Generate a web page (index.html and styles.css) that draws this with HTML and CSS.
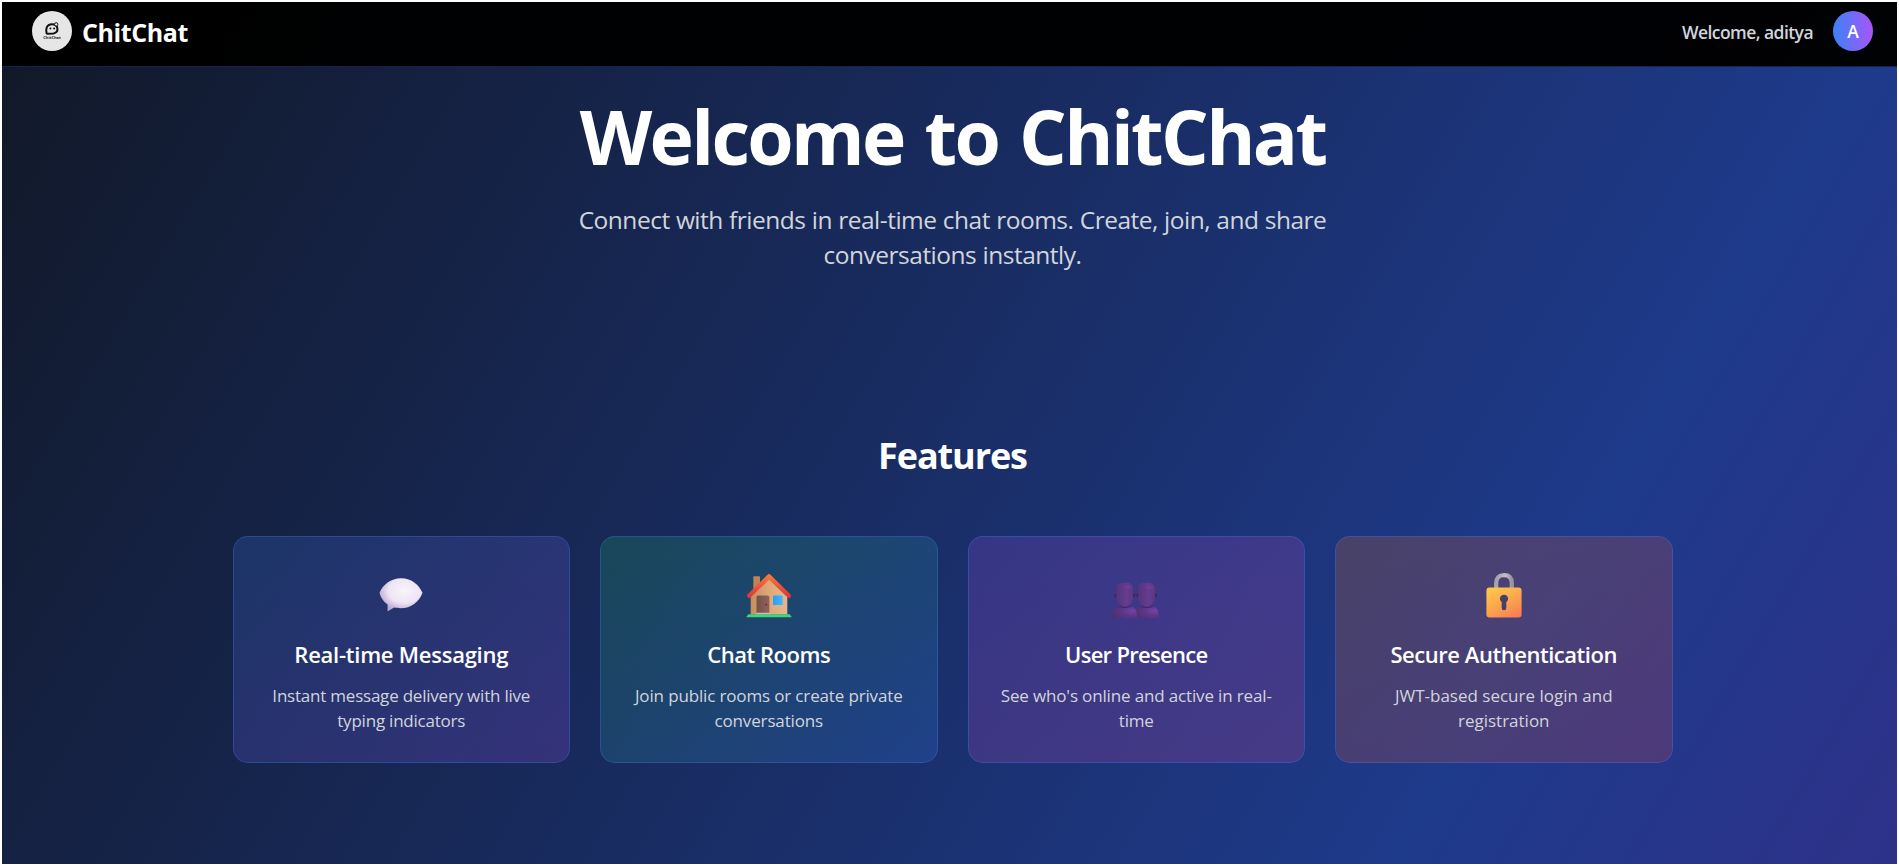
FILE: index.html
```html
<!DOCTYPE html>
<html lang="en">
<head>
<meta charset="utf-8">
<title>ChitChat</title>
<link rel="stylesheet" href="styles.css">
</head>
<body>
<div class="viewport">
<div class="page">
  <header class="header">
    <div class="brand">
      <svg class="logo" viewBox="0 0 40 40" aria-hidden="true">
        <circle cx="20" cy="20" r="20" fill="#e6e6e6"/>
        <path d="M14.6 22.4 C13.6 19.5 14 13.2 20 13.2 C26.5 13.2 27.4 21.4 21.5 22.4 L15.2 22.7 Z" fill="none" stroke="#111" stroke-width="2" stroke-linejoin="round"/>
        <circle cx="24.2" cy="13.4" r="1.7" fill="#e6e6e6" stroke="#111" stroke-width="1"/>
        <circle cx="18.4" cy="17.6" r="1" fill="#111"/><circle cx="22.1" cy="17.6" r="1" fill="#111"/>
        <text x="20" y="28.4" text-anchor="middle" class="logo-text">ChitChat</text>
      </svg>
      <span class="brand-name">ChitChat</span>
    </div>
    <div class="user">
      <span class="greeting">Welcome, aditya</span>
      <div class="avatar">A</div>
    </div>
  </header>
  <main class="main">
    <section class="hero">
      <h1>Welcome to ChitChat</h1>
      <p>Connect with friends in real-time chat rooms. Create, join, and share<br>conversations instantly.</p>
    </section>
    <section class="features">
      <h2>Features</h2>
      <div class="cards">
        <article class="card messaging">
          <svg class="icon" viewBox="0 0 48 48" aria-hidden="true">
            <defs><radialGradient id="bubble" cx=".58" cy=".38" r=".62"><stop offset="0" stop-color="#f8f5fa"/><stop offset=".6" stop-color="#eee5f4"/><stop offset="1" stop-color="#bba9d4"/></radialGradient></defs>
            <path d="M24 7.2 C35 7.2 42 14.2 45.5 21.7 C42 31.2 34 37.2 24 37.2 C21 37.2 19 36.9 17 36.6 C15 38 12.6 39.6 10.6 40.2 L10.6 33.6 C6 30.2 3.5 26.2 2.5 21.7 C6 13.7 13.5 7.2 24 7.2 Z" fill="url(#bubble)"/>
          </svg>
          <h3>Real-time Messaging</h3>
          <p>Instant message delivery with live<br>typing indicators</p>
        </article>
        <article class="card rooms">
          <svg class="icon" viewBox="0 0 48 48" aria-hidden="true">
            <defs>
              <linearGradient id="wall"><stop offset="0" stop-color="#c58e5e"/><stop offset=".45" stop-color="#dda679"/><stop offset="1" stop-color="#e5b78e"/></linearGradient>
              <linearGradient id="roof" x2="0" y2="1"><stop offset="0" stop-color="#fb7d38"/><stop offset="1" stop-color="#dd3038"/></linearGradient>
              <linearGradient id="door"><stop offset="0" stop-color="#765047"/><stop offset="1" stop-color="#93635a"/></linearGradient>
              <linearGradient id="pane"><stop offset="0" stop-color="#25a2f2"/><stop offset="1" stop-color="#48b6ff"/></linearGradient>
            </defs>
            <path d="M8.3 6 Q8.3 5.3 9 5.3 H14.2 Q15 5.3 15 6 V23 H8.3Z" fill="#bd8453"/>
            <path d="M5.7 24 L24 7.5 L42.3 24 V43.5 H5.7Z" fill="url(#wall)"/>
            <path d="M11.5 43 V26 Q11.5 24.4 13.1 24.4 H22.6 Q24.4 24.4 24.4 26 V43Z" fill="url(#door)"/>
            <circle cx="21.2" cy="33.6" r="1" fill="#563732"/>
            <path d="M11.5 41.8 H25 L25.7 43.5 H10.8Z" fill="#cdbab5"/>
            <rect x="28" y="24.5" width="9.7" height="9.6" rx=".7" fill="url(#pane)"/>
            <path d="M24 3 Q24.8 3 25.7 4 L45.3 23.3 Q46.3 24.3 45.6 26 Q44.3 28.2 42.4 26.3 L24 8.8 L5.6 26.3 Q3.7 28.2 2.4 26 Q1.7 24.3 2.7 23.3 L22.3 4 Q23.2 3 24 3Z" fill="url(#roof)"/>
            <path d="M3.3 43.2 H44.7 L46.4 45.4 V46.3 H1.6 V45.4Z" fill="#3fd47a"/>
          </svg>
          <h3>Chat Rooms</h3>
          <p>Join public rooms or create private<br>conversations</p>
        </article>
        <article class="card presence">
          <svg class="icon" viewBox="0 0 48 48" aria-hidden="true">
            <defs>
              <linearGradient id="head"><stop offset="0" stop-color="#54347f"/><stop offset=".65" stop-color="#673c90"/><stop offset="1" stop-color="#5c3682"/></linearGradient>
              <radialGradient id="torso" cx=".82" cy=".4" r=".9"><stop offset="0" stop-color="#7543a5"/><stop offset=".45" stop-color="#5d3789"/><stop offset="1" stop-color="#4e2f70"/></radialGradient>
              <g id="person">
                <path d="M.3 47 V42.5 Q.8 35 9.5 35 H16 Q24.6 35 25 42.5 V47Z" fill="url(#torso)"/>
                <path d="M7 35.6 Q13 37.6 19 35.6" fill="none" stroke="#40256a" stroke-width="1"/>
                <ellipse cx="3.8" cy="24.5" rx="1.4" ry="2" fill="#42245f"/><ellipse cx="21.8" cy="24.5" rx="1.4" ry="2" fill="#42245f"/>
                <path d="M12.8 11.8 C18 11.6 21.2 13.2 21.2 17.2 V25.2 C21 31.4 18 35.2 12.8 35.2 C7.6 35.2 4.5 31.4 4.3 25.2 V17.2 C4.3 13.2 7.6 11.6 12.8 11.8Z" fill="url(#head)"/>
                <ellipse cx="15.8" cy="16.4" rx="4" ry="1.2" fill="#7846a0" opacity=".5"/>
              </g>
            </defs>
            <use href="#person" x="21.8"/><use href="#person"/>
          </svg>
          <h3>User Presence</h3>
          <p>See who's online and active in real-<br>time</p>
        </article>
        <article class="card secure">
          <svg class="icon" viewBox="0 0 48 48" aria-hidden="true">
            <defs>
              <linearGradient id="body" x1=".2" y1="0" x2=".8" y2="1"><stop offset="0" stop-color="#ffc64b"/><stop offset=".55" stop-color="#fba34e"/><stop offset="1" stop-color="#f97d56"/></linearGradient>
              <linearGradient id="shackle"><stop offset="0" stop-color="#a6a0ae"/><stop offset=".6" stop-color="#c6bdca"/><stop offset="1" stop-color="#98929e"/></linearGradient>
            </defs>
            <path d="M16.2 19 V12 Q16.2 4.2 24 4.2 Q31.8 4.2 31.8 12 V19" fill="none" stroke="url(#shackle)" stroke-width="4.2"/>
            <rect x="6.4" y="16.5" width="35.2" height="30" rx="3.2" fill="url(#body)"/>
            <path d="M24 23.7 A4 4 0 0 1 26.3 31 V37 A2.3 2.3 0 0 1 21.7 37 V31 A4 4 0 0 1 24 23.7Z" fill="#493e68"/>
          </svg>
          <h3>Secure Authentication</h3>
          <p>JWT-based secure login and<br>registration</p>
        </article>
      </div>
    </section>
  </main>
</div>
</div>
</body>
</html>
```
FILE: styles.css
```css
* { box-sizing: border-box; margin: 0; padding: 0; }
body { background: #fff; font-family: "Open Sans", "Noto Sans", sans-serif; color: #fff; overflow: hidden; }
.viewport { margin: 2px; height: 862px; overflow: hidden; }
.page { width: 1901px; height: 862px; background: linear-gradient(to bottom right, #111827, #1e3a8a, #581c87) 0 0 / 1901px 3200px no-repeat; }
.header { height: 65px; padding: 0 30px; display: flex; align-items: center; justify-content: space-between; background: rgba(0,0,0,.97); border-bottom: 1px solid rgba(30,58,138,.6); }
.brand, .user { display: flex; align-items: center; }
.brand { gap: 10px; }
.user { gap: 20px; }
.logo { width: 40px; height: 40px; margin-bottom: 6px; }
.logo-text { font: 700 4px "Open Sans", sans-serif; fill: #222; }
.brand-name { font-size: 25px; line-height: 34px; font-weight: 700; letter-spacing: -.4px; margin-bottom: 5px; }
.greeting { font-size: 17.5px; line-height: 24px; font-weight: 600; letter-spacing: -.55px; color: #d1d5db; margin-bottom: 4px; }
.avatar { width: 40px; height: 40px; margin-bottom: 6px; border-radius: 50%; background: linear-gradient(to right, #3b82f6, #a855f7); display: grid; place-items: center; font-size: 17.5px; font-weight: 600; }
.hero { padding-top: 23.5px; text-align: center; }
.hero h1 { font-size: 75px; line-height: 90px; font-weight: 700; letter-spacing: -2.65px; word-spacing: 4px; }
.hero p { margin-top: 21px; font-size: 24.5px; line-height: 35px; letter-spacing: -.5px; word-spacing: .4px; color: #d1d5db; }
.features { padding: 161.5px 230.5px 0; text-align: center; }
.features h2 { font-size: 36px; line-height: 45px; font-weight: 700; letter-spacing: -1.1px; }
.cards { margin-top: 58px; display: grid; grid-template-columns: repeat(4, 1fr); gap: 30px; }
.card { height: 227px; padding-top: 34px; border: 1px solid rgba(59,130,246,.3); border-radius: 15px; }
.icon { display: block; width: 48px; height: 48px; margin: 0 auto; }
.card h3 { margin-top: 20px; font-size: 22px; line-height: 30px; font-weight: 600; letter-spacing: -.25px; }
.card p { margin-top: 14px; font-size: 17px; line-height: 25px; letter-spacing: -.15px; color: #d1d5db; }
.messaging { background: linear-gradient(to bottom right, rgba(59,130,246,.2), rgba(168,85,247,.2)); }
.messaging p { letter-spacing: -.22px; }
.rooms { background: linear-gradient(to bottom right, rgba(34,197,94,.2), rgba(59,130,246,.2)); }
.rooms h3 { letter-spacing: -.45px; }
.presence { background: linear-gradient(to bottom right, rgba(168,85,247,.2), rgba(236,72,153,.2)); }
.presence h3 { letter-spacing: -.7px; }
.secure { background: linear-gradient(to bottom right, rgba(249,115,22,.2), rgba(239,68,68,.2)); }
.secure h3 { letter-spacing: -.46px; }
.secure p { letter-spacing: 0; }
```
